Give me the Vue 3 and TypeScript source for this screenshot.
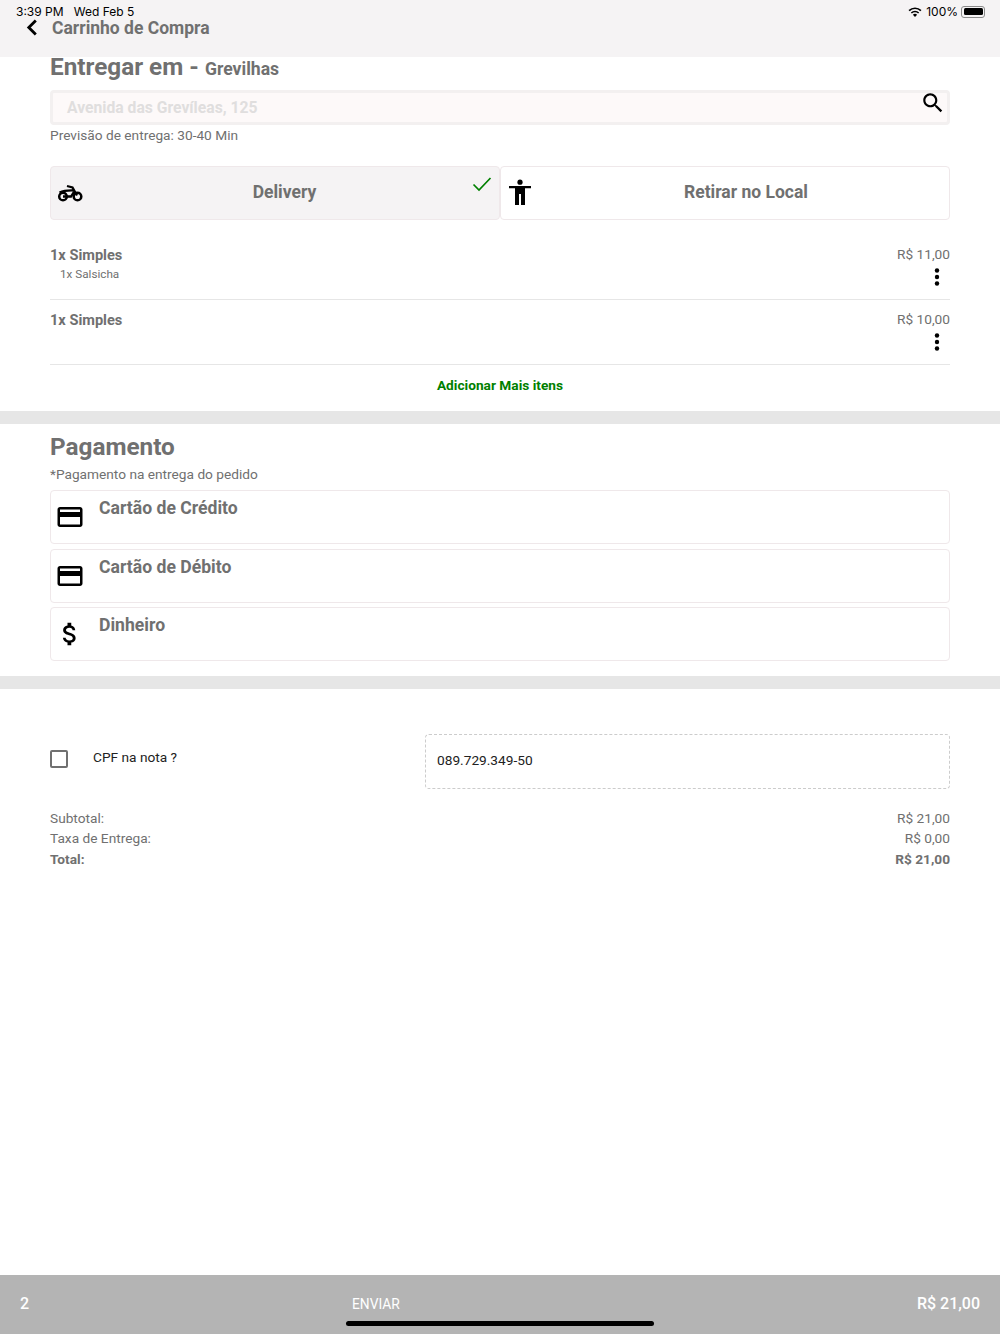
<script setup lang="ts">
const pedidos = [
  { nome: '1x Simples', extra: '1x Salsicha', preco: 'R$ 11,00' },
  { nome: '1x Simples', extra: '', preco: 'R$ 10,00' },
]

const pagamentos = [
  { nome: 'Cartão de Crédito', icone: 'cartao' },
  { nome: 'Cartão de Débito', icone: 'cartao' },
  { nome: 'Dinheiro', icone: 'dinheiro' },
]
</script>

<template>
  <div class="pagina">
    <div class="status">
      <span>3:39 PM&nbsp;&nbsp;&nbsp;Wed Feb 5</span>
      <span class="status-dir">
        <svg class="wifi" viewBox="0 0 14 10" width="14" height="10">
          <path d="M7 10 4.9 7.700a3 3 0 0 1 4.200 0z" />
          <path d="M3.900 6.600 2.800 5.400a6 6 0 0 1 8.400 0l-1.100 1.200a4.400 4.400 0 0 0-6.200 0z" />
          <path d="M1.700 4.300.5 3.100a9.200 9.200 0 0 1 13 0l-1.200 1.200a7.500 7.500 0 0 0-10.600 0z" />
        </svg>
        100%
        <span class="bateria"><i></i></span>
      </span>
    </div>

    <header class="topo">
      <svg class="voltar" viewBox="0 0 12 18" width="12" height="18">
        <path d="M9.800 1.500 2.800 8.500l7 7" fill="none" stroke="#000" stroke-width="2.800" />
      </svg>
      <span>Carrinho de Compra</span>
    </header>

    <section class="bloco entrega">
      <h1>Entregar em - <small>Grevilhas</small></h1>
      <div class="busca">
        <span>Avenida das Grevíleas, 125</span>
        <svg viewBox="0 0 24 24" width="26" height="26">
          <path d="M15.500 14h-.79l-.28-.27C15.410 12.590 16 11.110 16 9.500 16 5.910 13.090 3 9.500 3S3 5.910 3 9.500 5.910 16 9.500 16c1.610 0 3.090-.59 4.230-1.570l.27.28v.79l5 4.990L20.490 19l-4.990-5zm-6 0C7.010 14 5 11.990 5 9.500S7.010 5 9.500 5 14 7.010 14 9.500 11.990 14 9.500 14z" />
        </svg>
      </div>
      <p class="previsao">Previsão de entrega: 30-40 Min</p>

      <div class="opcoes">
        <div class="opcao ativa">
          <svg class="icone" viewBox="0 0 26 18" width="26" height="18">
            <circle cx="6" cy="12.500" r="3.800" fill="none" stroke="#000" stroke-width="2.500" />
            <circle cx="20.500" cy="12.500" r="3.800" fill="none" stroke="#000" stroke-width="2.500" />
            <path d="M6 12.500h8l3.500-5.500M2.500 8.500Q8 6 17.500 6.500M10 2l5.500 1.500 4.500 8" fill="none" stroke="#000" stroke-width="2.300" />
          </svg>
          <span>Delivery</span>
          <svg class="check" viewBox="0 0 20 16" width="20" height="16">
            <path d="M1.500 8.500 7 14 18.500 2" fill="none" stroke="#008000" stroke-width="1.700" />
          </svg>
        </div>
        <div class="opcao local">
          <svg class="icone" viewBox="0 0 24 26" width="24" height="26">
            <circle cx="12" cy="3.200" r="2.600" />
            <path d="M1 7h22v2.300h-6V26h-4V15h-2v11H7V9.300H1z" />
          </svg>
          <span>Retirar no Local</span>
        </div>
      </div>

      <div v-for="item in pedidos" :key="item.preco" class="pedido">
        <div>
          <strong>{{ item.nome }}</strong>
          <p v-if="item.extra">{{ item.extra }}</p>
        </div>
        <div class="pedido-dir">
          <span>{{ item.preco }}</span>
          <svg viewBox="0 0 6 20" width="6" height="20">
            <circle cx="3" cy="3.500" r="2.200" />
            <circle cx="3" cy="10" r="2.200" />
            <circle cx="3" cy="16.500" r="2.200" />
          </svg>
        </div>
      </div>

      <a class="adicionar">Adicionar Mais itens</a>
    </section>

    <div class="divisor"></div>

    <section class="bloco pagamento">
      <h1>Pagamento</h1>
      <p class="previsao">*Pagamento na entrega do pedido</p>
      <div v-for="p in pagamentos" :key="p.nome" class="forma">
        <svg v-if="p.icone === 'cartao'" viewBox="0 0 24 24" width="30" height="30">
          <path d="M20 4H4c-1.110 0-1.990.89-1.990 2L2 18c0 1.110.89 2 2 2h16c1.110 0 2-.89 2-2V6c0-1.110-.89-2-2-2zm0 14H4v-6h16v6zm0-10H4V6h16v2z" />
        </svg>
        <svg v-else viewBox="0 0 24 24" width="30" height="30">
          <path d="M11.800 10.900c-2.270-.59-3-1.200-3-2.150 0-1.090 1.010-1.850 2.700-1.850 1.780 0 2.440.85 2.500 2.100h2.210c-.07-1.720-1.120-3.300-3.210-3.810V3h-3v2.160c-1.940.42-3.500 1.680-3.500 3.610 0 2.310 1.910 3.460 4.700 4.130 2.500.6 3 1.480 3 2.410 0 .69-.49 1.790-2.700 1.790-2.060 0-2.870-.92-2.980-2.100h-2.200c.12 2.190 1.760 3.420 3.680 3.830V21h3v-2.150c1.950-.37 3.500-1.500 3.500-3.550 0-2.840-2.430-3.810-4.700-4.400z" />
        </svg>
        <span>{{ p.nome }}</span>
      </div>
    </section>

    <div class="divisor"></div>

    <section class="bloco resumo">
      <div class="cpf">
        <div class="cpf-esq">
          <span class="caixa"></span>
          <span>CPF na nota ?</span>
        </div>
        <div class="cpf-campo">089.729.349-50</div>
      </div>
      <div class="linha"><span>Subtotal:</span><span>R$ 21,00</span></div>
      <div class="linha"><span>Taxa de Entrega:</span><span>R$ 0,00</span></div>
      <div class="linha total"><span>Total:</span><span>R$ 21,00</span></div>
    </section>

    <footer class="rodape">
      <span class="forte">2</span>
      <span class="enviar">ENVIAR</span>
      <span class="forte">R$ 21,00</span>
    </footer>
    <div class="home"></div>
  </div>
</template>

<style>
html, body {
  margin: 0;
  background: #fff;
}
</style>

<style scoped>
* {
  box-sizing: border-box;
}
.pagina {
  position: relative;
  width: 1000px;
  height: 1334px;
  display: flex;
  flex-direction: column;
  overflow: hidden;
  font-family: Roboto, "Liberation Sans", sans-serif;
  color: #707070;
}
.status {
  position: absolute;
  top: 4px;
  left: 16px;
  right: 15px;
  display: flex;
  justify-content: space-between;
  font-family: Inter, "Liberation Sans", sans-serif;
  font-size: 12px;
  line-height: 15px;
  color: #000;
}
.status-dir {
  display: flex;
  align-items: center;
  gap: 4px;
}
.bateria {
  width: 24px;
  height: 12px;
  padding: 1.500px;
  border: 1px solid #8a8a8a;
  border-radius: 3px;
  margin-left: -1px;
}
.bateria i {
  display: block;
  height: 100%;
  background: #000;
  border-radius: 1.500px;
}
.topo {
  height: 57px;
  flex: none;
  padding: 19px 0 0 26px;
  display: flex;
  align-items: flex-start;
  gap: 14px;
  background: #f5f3f4;
  font-size: 17.500px;
  font-weight: 700;
  line-height: 18px;
}
.bloco {
  padding: 0 50px;
}
h1 {
  margin: 0;
  font-size: 24.300px;
  font-weight: 700;
  line-height: 30px;
}
h1 small {
  font-size: 17.600px;
}
.entrega h1 {
  margin-top: -5px;
  height: 38px;
}
.busca {
  height: 35px;
  display: flex;
  justify-content: space-between;
  padding: 5px 1px 0 14px;
  border: 3px solid #f3f0f0;
  border-radius: 4px;
  background: #fdf9f9;
  font-size: 15.700px;
  font-weight: 700;
  color: #e0dede;
}
.busca svg {
  margin-top: -8px;
}
.previsao {
  margin: 2px 0 0;
  font-size: 13.700px;
  line-height: 17px;
}
.opcoes {
  display: flex;
  margin-top: 22px;
}
.opcao {
  position: relative;
  width: 450px;
  flex: none;
  height: 54px;
  display: flex;
  align-items: center;
  justify-content: center;
  padding: 0 0 2px 19px;
  border: 1px solid #efe8ea;
  border-radius: 4px;
  background: #fff;
  font-size: 17.500px;
  font-weight: 700;
}
.opcao.ativa {
  background: #f5f3f4;
}
.opcao.local {
  padding-left: 42px;
}
.opcao .icone {
  position: absolute;
  left: 6px;
  top: 50%;
  margin-top: -9px;
}
.opcao.local .icone {
  left: 7px;
  margin-top: -14px;
}
.check {
  position: absolute;
  top: 9px;
  right: 7px;
}
.pedido {
  height: 65px;
  display: flex;
  justify-content: space-between;
  padding-top: 11px;
  border-bottom: 1px solid #e6e6e6;
  font-size: 13.700px;
  line-height: 18px;
}
.opcoes + .pedido {
  margin-top: 13px;
  height: 67px;
  padding-top: 13px;
}
.pedido strong {
  font-weight: 700;
  font-size: 14.600px;
}
.pedido p {
  margin: 2px 0 0 10px;
  font-size: 11.700px;
  line-height: 16px;
}
.pedido-dir {
  display: flex;
  flex-direction: column;
  align-items: flex-end;
  gap: 4px;
  margin-top: -1px;
}
.pedido-dir svg {
  margin-right: 10px;
}
.adicionar {
  display: block;
  margin-top: 12px;
  text-align: center;
  font-size: 13.700px;
  font-weight: 700;
  line-height: 17px;
  color: #008000;
}
.divisor {
  height: 13px;
  flex: none;
  background: #e6e6e6;
}
.entrega {
  height: 354px;
  flex: none;
}
.pagamento {
  height: 252px;
  flex: none;
  padding-top: 8px;
}
.pagamento .previsao {
  margin: 4px 0 7px;
}
.forma {
  height: 54px;
  display: flex;
  gap: 14px;
  padding: 8px 5px 0 4px;
  margin-bottom: 4.500px;
  border: 1px solid #efe8ea;
  border-radius: 4px;
  font-size: 17.600px;
  font-weight: 700;
  line-height: 18px;
}
.forma svg {
  margin-top: 3px;
}
.resumo {
  flex: 1;
  padding-top: 45px;
}
.cpf {
  display: flex;
  margin-bottom: 19px;
}
.cpf-esq {
  width: 375px;
  height: 55px;
  display: flex;
  align-items: center;
  gap: 25px;
  padding-bottom: 9px;
  font-size: 13.700px;
  color: #222;
}
.caixa {
  width: 18px;
  height: 18px;
  margin-top: 4px;
  border: 2px solid #707070;
  border-radius: 2px;
}
.cpf-campo {
  flex: 1;
  height: 55px;
  padding: 17px 11px 0;
  border: 1px dashed #ccc;
  border-radius: 4px;
  font-size: 13.700px;
  line-height: 17px;
  color: #222;
}
.linha {
  display: flex;
  justify-content: space-between;
  font-size: 13.700px;
  line-height: 20.400px;
}
.total {
  font-weight: 700;
}
.rodape {
  height: 59px;
  flex: none;
  display: flex;
  justify-content: space-between;
  align-items: center;
  padding: 0 20px 2px;
  background: #b4b4b4;
  color: #fff;
}
.forte {
  font-size: 16px;
  font-weight: 500;
}
.enviar {
  position: absolute;
  left: 352px;
  font-size: 13.800px;
}
.home {
  position: absolute;
  left: 346px;
  bottom: 8px;
  width: 308px;
  height: 5px;
  border-radius: 3px;
  background: #000;
}
</style>
